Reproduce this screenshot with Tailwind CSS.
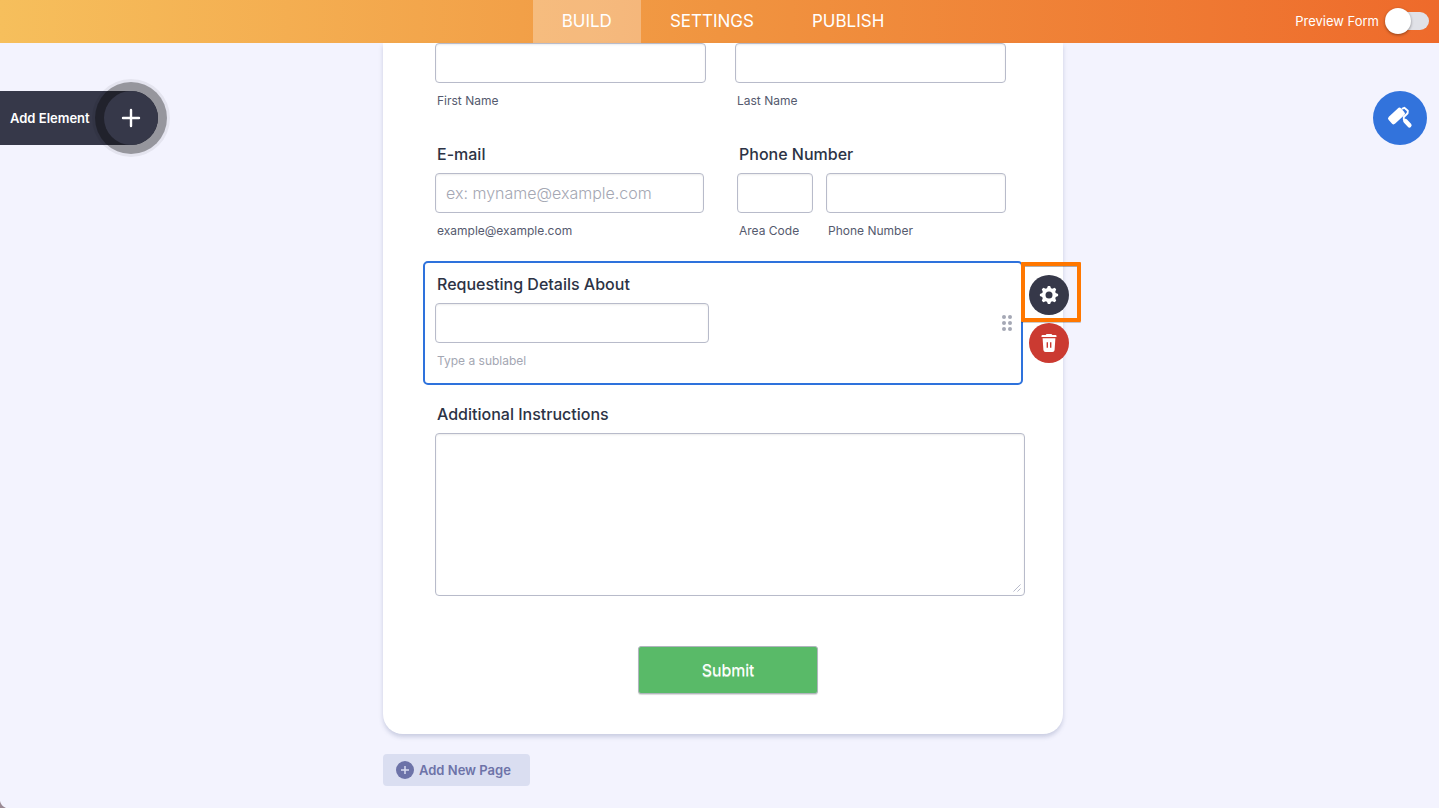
<!DOCTYPE html>
<html lang="en">
<head>
    <meta charset="UTF-8">
    <meta name="viewport" content="width=device-width, initial-scale=1.0">
    <title>Form Builder</title>
    <script src="https://cdn.jsdelivr.net/npm/@tailwindcss/browser@4"></script>
</head>
<body class="relative flex min-h-screen flex-col bg-[#f3f3fe] font-['Inter',sans-serif] text-[#2c3345]">

    <!-- Top bar -->
    <header class="flex h-[43px] items-stretch bg-linear-to-r from-[#f6bf5c] via-[#f09440] to-[#ee6a2b] text-white">
        <div class="flex-1 basis-[383px]"></div>
        <nav class="flex w-[680px] shrink-0 justify-center text-[17px]">
            <a href="#build" class="flex items-center bg-white/30 px-[29px]">BUILD</a>
            <a href="#settings" class="flex items-center px-[29px]">SETTINGS</a>
            <a href="#publish" class="flex items-center px-[29px]">PUBLISH</a>
        </nav>
        <div class="flex flex-1 basis-[376px] items-center justify-end gap-[7px] pr-[10px] pb-px">
            <label for="preview" class="pt-px text-[13px]">Preview Form</label>
            <input id="preview" type="checkbox" class="relative h-[18px] w-[43px] appearance-none rounded-full bg-[#e0e1e7] before:absolute before:-top-1 before:-left-px before:size-[26px] before:rounded-full before:bg-white before:shadow-[0_1px_3px_rgba(0,0,0,0.4)] before:content-['']">
        </div>
    </header>

    <div class="flex flex-1">

        <!-- Left rail -->
        <aside class="flex-1 basis-[383px] pt-12">
            <button type="button" class="flex h-[54px] w-[158px] items-center justify-between rounded-r-full bg-[#363849] pl-[10px] text-[13px] font-semibold text-white">
                <span class="pt-px">Add Element</span>
                <span class="flex size-[54px] items-center justify-center rounded-full bg-[#363849] shadow-[0_0_0_9px_rgba(0,0,0,0.34),0_0_0_12px_rgba(0,0,0,0.06)]">
                    <svg class="size-5" viewBox="0 0 20 20" fill="none" stroke="currentColor" stroke-width="2.4" stroke-linecap="round"><path d="M10 2v16M2 10h16"/></svg>
                </span>
            </button>
        </aside>

        <!-- Form -->
        <main class="w-[680px] shrink-0">
            <form class="rounded-b-[20px] bg-white px-10 pb-10 shadow-[0_3px_4px_rgba(84,95,145,0.25)]">
                <div class="mb-[7px] flex gap-[29px] px-3 pb-4">
                    <div class="w-[271px]">
                        <input id="first" type="text" class="block h-10 w-full rounded border border-[#b8bbca] px-[10px] shadow-[inset_0_1px_2px_rgba(0,0,0,0.08)]">
                        <label for="first" class="mt-[10px] block pl-[2px] text-xs text-[#555a6e]">First Name</label>
                    </div>
                    <div class="w-[271px]">
                        <input id="last" type="text" class="block h-10 w-full rounded border border-[#b8bbca] px-[10px] shadow-[inset_0_1px_2px_rgba(0,0,0,0.08)]">
                        <label for="last" class="mt-[10px] block pl-[2px] text-xs text-[#555a6e]">Last Name</label>
                    </div>
                </div>

                <div class="mb-[6px] flex">
                    <div class="w-[302px] px-3 pt-3 pb-4">
                        <label for="email" class="mb-[9px] block pl-[2px] text-base/5 font-medium">E-mail</label>
                        <input id="email" type="email" placeholder="ex: myname@example.com" class="block h-10 w-[269px] rounded border border-[#b8bbca] px-[10px] font-light shadow-[inset_0_1px_2px_rgba(0,0,0,0.08)] placeholder:text-[#a4a7b3]">
                        <p class="mt-[10px] pl-[2px] text-xs text-[#555a6e]">example@example.com</p>
                    </div>
                    <fieldset class="flex-1 px-3 pt-3 pb-4">
                        <legend class="float-left mb-[9px] w-full pl-[2px] text-base/5 font-medium">Phone Number</legend>
                        <div class="clear-both flex gap-[13px]">
                            <div class="w-[76px]">
                                <input id="area" type="tel" class="block h-10 w-full rounded border border-[#b8bbca] px-[10px] shadow-[inset_0_1px_2px_rgba(0,0,0,0.08)]">
                                <label for="area" class="mt-[10px] block pl-[2px] text-xs text-[#555a6e]">Area Code</label>
                            </div>
                            <div class="w-[180px]">
                                <input id="phone" type="tel" class="block h-10 w-full rounded border border-[#b8bbca] px-[10px] shadow-[inset_0_1px_2px_rgba(0,0,0,0.08)]">
                                <label for="phone" class="mt-[10px] block pl-[2px] text-xs text-[#555a6e]">Phone Number</label>
                            </div>
                        </div>
                    </fieldset>
                </div>

                <!-- Selected question -->
                <div class="relative mb-[7px] rounded-[5px] border-2 border-[#2e72dc] px-[10px] pt-[11px] pb-[14px]">
                    <label for="about" class="mb-[9px] block pl-[2px] text-base/5 font-medium">Requesting Details About</label>
                    <input id="about" type="text" class="block h-10 w-[274px] rounded border border-[#b8bbca] px-[10px] shadow-[inset_0_1px_2px_rgba(0,0,0,0.08)]">
                    <p class="mt-[10px] pl-[2px] text-xs text-[#a4a7b3]">Type a sublabel</p>

                    <svg class="absolute top-[51px] right-2 h-[18px] w-3 text-[#a5a8b5]" viewBox="0 0 12 18" fill="currentColor">
                        <circle cx="3" cy="3" r="2"/><circle cx="9" cy="3" r="2"/>
                        <circle cx="3" cy="9" r="2"/><circle cx="9" cy="9" r="2"/>
                        <circle cx="3" cy="15" r="2"/><circle cx="9" cy="15" r="2"/>
                    </svg>

                    <div class="absolute -top-px left-full flex flex-col gap-px">
                        <div class="rounded-[1px] border-4 border-[#ff7700] pt-[9px] pr-2 pb-[3px] pl-1 shadow-[0_1px_0_rgba(0,0,0,0.2),inset_0_1px_0_rgba(0,0,0,0.3)]">
                            <button type="button" aria-label="Properties" class="flex size-10 items-center justify-center rounded-full bg-[#363849] text-white">
                                <svg class="size-5" viewBox="0 0 20 20">
                                    <g fill="currentColor">
                                        <circle cx="10" cy="10" r="7"/>
                                        <path id="tooth" d="M7.4 4.5l1.500-3.600h2.200l1.500 3.600z"/>
                                        <use href="#tooth" transform="rotate(45 10 10)"/>
                                        <use href="#tooth" transform="rotate(90 10 10)"/>
                                        <use href="#tooth" transform="rotate(135 10 10)"/>
                                        <use href="#tooth" transform="rotate(180 10 10)"/>
                                        <use href="#tooth" transform="rotate(225 10 10)"/>
                                        <use href="#tooth" transform="rotate(270 10 10)"/>
                                        <use href="#tooth" transform="rotate(315 10 10)"/>
                                    </g>
                                    <circle cx="10" cy="10" r="3.5" fill="#363849"/>
                                </svg>
                            </button>
                        </div>
                        <button type="button" aria-label="Delete" class="ml-2 flex size-10 items-center justify-center rounded-full bg-[#cb3a31] text-white">
                            <svg class="h-5 w-4" viewBox="0 0 16 20">
                                <path fill="currentColor" d="M5.6.9h4.8l1 1h3.1a1 1 0 0 1 1 1v1.2H.5V2.9a1 1 0 0 1 1-1h3.1z"/>
                                <path fill="currentColor" d="M1.6 5.3h12.8l-.8 11.7a2.2 2.2 0 0 1-2.2 2H4.6a2.2 2.2 0 0 1-2.2-2z"/>
                                <path stroke="#cb3a31" stroke-width="1.4" d="M6.3 9.2v5.6M9.7 9.2v5.6"/>
                            </svg>
                        </button>
                    </div>
                </div>

                <div class="mb-[7px] px-3 pt-3 pb-4">
                    <label for="notes" class="mb-[9px] block pl-[2px] text-base/5 font-medium">Additional Instructions</label>
                    <div class="relative w-[590px]">
                        <textarea id="notes" class="block h-[163px] w-full resize-none rounded border border-[#b8bbca] p-[10px] shadow-[inset_0_1px_2px_rgba(0,0,0,0.08)]"></textarea>
                        <svg class="absolute right-1 bottom-1 size-2" viewBox="0 0 8 8" stroke="#b8bbca" stroke-linecap="round"><path d="M.7 7.3L7.3.7M4.7 7.3l2.6-2.6"/></svg>
                    </div>
                </div>

                <div class="flex justify-center pt-[27px] pl-[10px]">
                    <button type="submit" class="h-12 w-[180px] rounded-[3px] border border-[#b0b5bd] bg-[#59ba68] text-base text-white shadow-[0_1px_1px_rgba(0,0,0,0.15)] text-shadow-[0_1px_0_rgba(255,255,255,0.6)]">Submit</button>
                </div>
            </form>

            <button type="button" class="mt-5 flex h-8 w-[147px] items-center gap-[5px] rounded bg-[#dadef1] pl-[13px] text-[13px] font-semibold text-[#6d73a8]">
                <svg class="size-[18px]" viewBox="0 0 18 18"><circle cx="9" cy="9" r="9" fill="#6d73a8"/><path d="M9 5v8M5 9h8" stroke="#dadef1" stroke-width="1.5"/></svg>
                <span class="pt-px">Add New Page</span>
            </button>
        </main>

        <!-- Right rail -->
        <aside class="flex flex-1 basis-[376px] items-start justify-end pt-12 pr-3">
            <button type="button" aria-label="Form designer" class="flex size-[54px] items-center justify-center rounded-full bg-[#3273dc] text-white">
                <svg class="size-[26px]" viewBox="0 0 26 26" fill="none" stroke="currentColor" stroke-linecap="round" stroke-linejoin="round">
                    <rect x="1" y="6.300" width="17" height="9.400" rx="2.400" transform="rotate(-43 9.500 11)" fill="currentColor" stroke="none"/>
                    <path stroke-width="1.900" d="M15.500 3.600l1.800-.8 3.500 2.900-.2 2.600-3.800 3.700v2.800"/>
                    <path stroke-width="4.400" d="M18.400 16l4 4.300"/>
                </svg>
            </button>
        </aside>
    </div>

    <svg class="absolute bottom-0 left-0 size-[7px]" viewBox="0 0 7 7"><path fill="#9b8b95" d="M0 0q1 5 6 7H0z"/></svg>
</body>
</html>
